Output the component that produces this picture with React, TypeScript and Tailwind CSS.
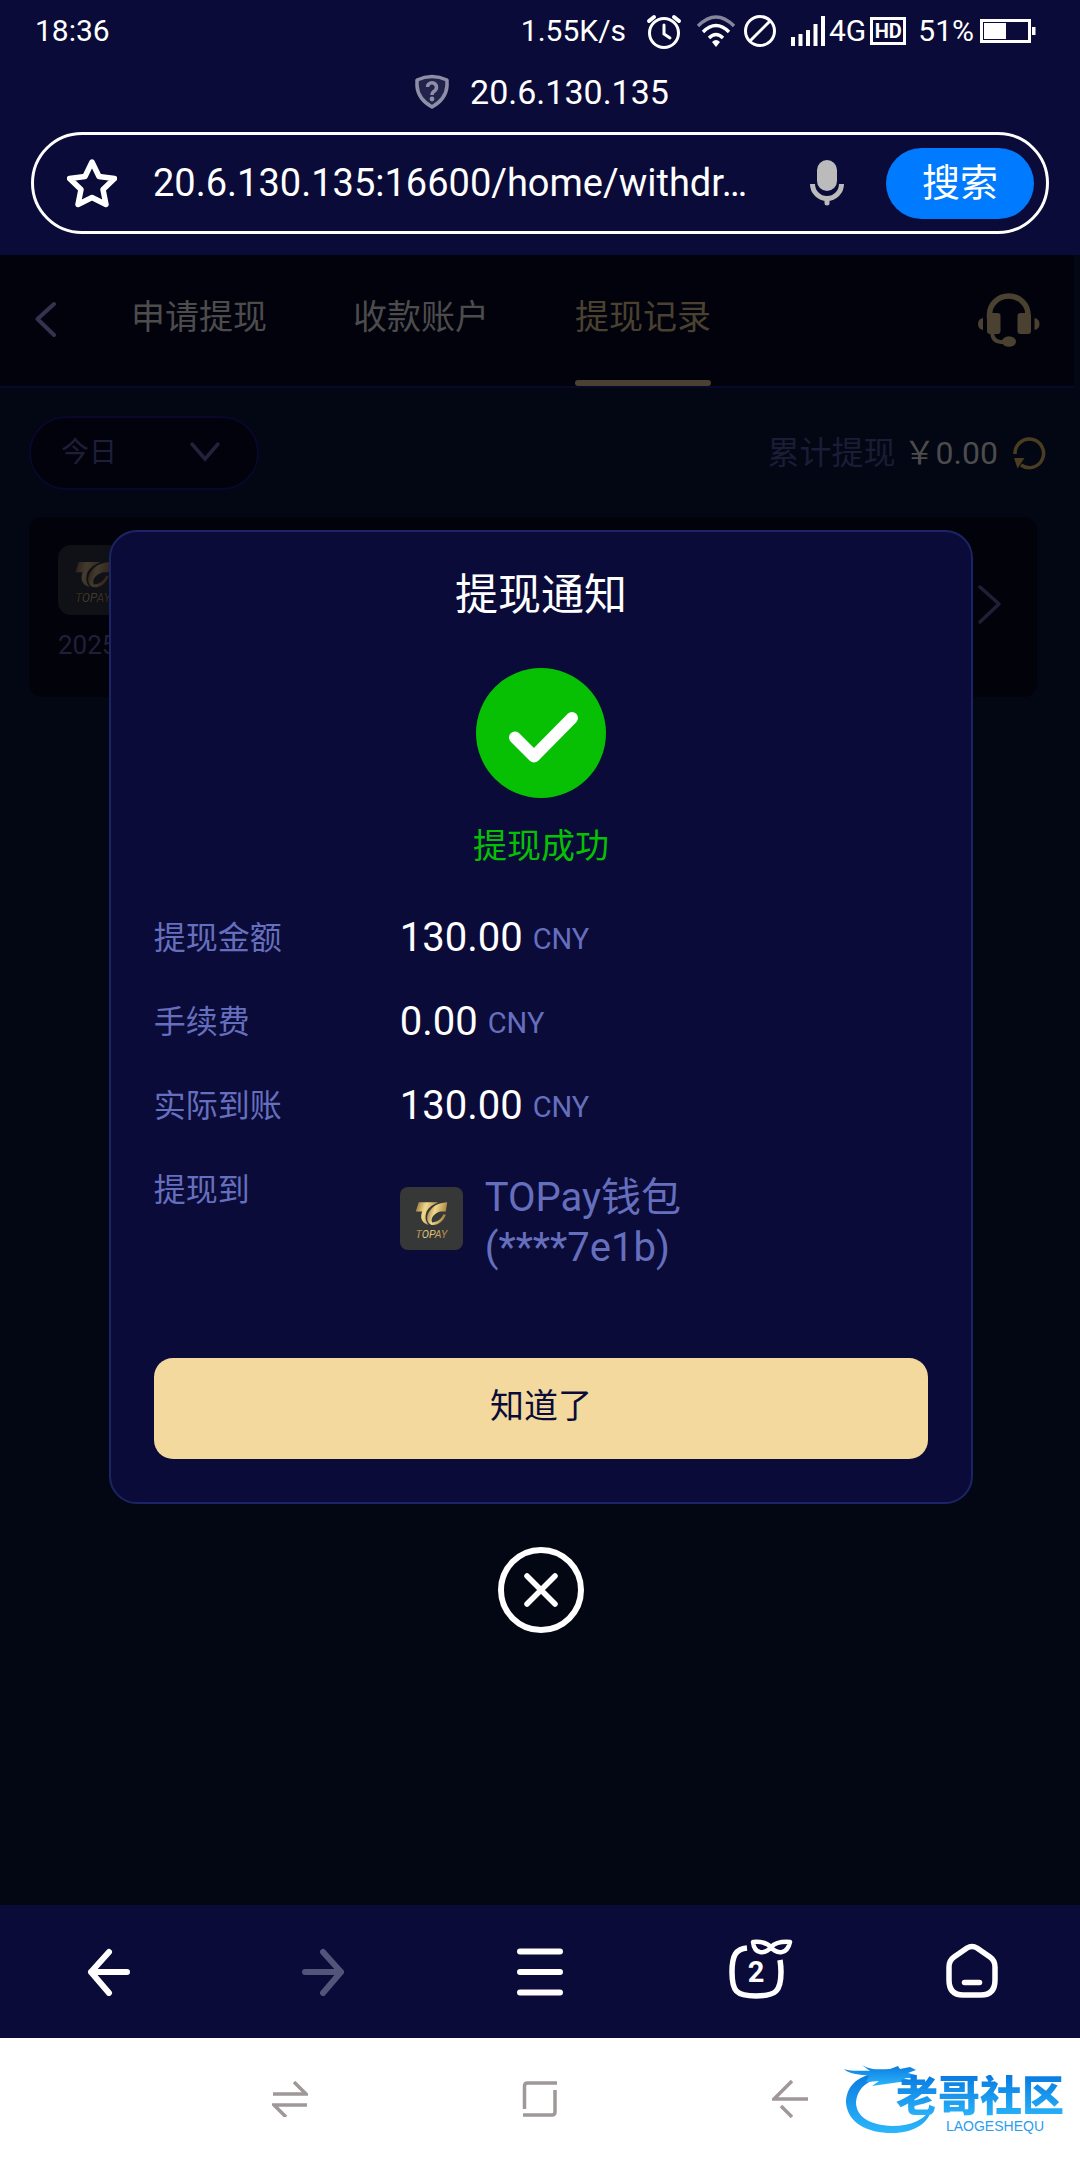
import { useState } from "react";

const TABS = ["申请提现", "收款账户", "提现记录"];

const AMOUNTS = [
  { label: "提现金额", value: "130.00" },
  { label: "手续费", value: "0.00" },
  { label: "实际到账", value: "130.00" },
];

function StatusBar() {
  return (
    <div className="flex h-[62px] items-center pl-[35px] pr-11 text-[30px] leading-none">
      <span>18:36</span>
      <span className="ml-auto">1.55K/s</span>
      {/* Alarm */}
      <svg className="ml-5 h-9 w-9" viewBox="0 0 36 36" fill="none" stroke="#fff" strokeWidth="3" strokeLinecap="round">
        <circle cx="18" cy="20" r="14.5" />
        <path d="M18 12v9l6 4" />
        <path d="M3 8l5-4M33 8l-5-4" strokeWidth="4" />
      </svg>
      {/* Wifi */}
      <svg className="ml-[15px] h-[34px] w-[38px]" viewBox="0 0 38 34" fill="none" stroke="#fff" strokeWidth="3.4">
        <path d="M1 12Q19-6 37 12" opacity="0.5" />
        <path d="M6 18q13-13 26 0" />
        <path d="M12 24q7-7 14 0" />
        <path d="M15 28q4-4 8 0l-4 5z" fill="#fff" stroke="none" />
      </svg>
      <svg className="ml-2 h-[34px] w-[34px]" viewBox="0 0 34 34" fill="none" stroke="#fff" strokeWidth="3">
        <circle cx="17" cy="17" r="14.5" />
        <path d="M7 27L27 7" />
      </svg>
      {/* Signal */}
      <svg className="ml-[14px] h-[30px] w-[34px]" viewBox="0 0 34 30" fill="#fff">
        <path d="M0 21h4v9H0zM7.500 18h4v12h-4zM15 14h4v16h-4zM22.500 8h4v22h-4zM30 0h4v30h-4z" />
      </svg>
      <span className="ml-1">4G</span>
      <span className="ml-1 flex h-7 w-9 items-center justify-center border-[3px] border-white text-[20px] font-bold leading-none">
        HD
      </span>
      <span className="ml-3">51%</span>
      {/* Battery */}
      <svg className="ml-[6px] h-6 w-14" viewBox="0 0 56 24">
        <rect x="1.500" y="1.500" width="48" height="21" fill="none" stroke="#fff" strokeWidth="3" />
        <rect x="4" y="4" width="22" height="16" fill="#fff" />
        <path d="M52 8h3.500v8H52z" fill="#fff" />
      </svg>
    </div>
  );
}

function AddressBar() {
  return (
    <>
      <div className="flex h-[60px] items-center justify-center gap-5 pl-[3px] text-[34px] leading-none">
        <svg className="h-9 w-9" viewBox="0 0 36 36" fill="none" stroke="#8e8ea6">
          <path
            d="M3 6Q18-1 33 6V12Q32 25 18 33Q4 25 3 12Z"
            strokeWidth="3.500"
            strokeLinejoin="round"
            fill="#22234c"
          />
          <path d="M13.500 13a4.500 4.500 0 1 1 7 4q-2.500 1.500-2.500 4" strokeWidth="3.500" />
          <circle cx="18" cy="25" r="2.400" fill="#8e8ea6" stroke="none" />
        </svg>
        <span>20.6.130.135</span>
      </div>
      <form
        className="mx-[31px] mt-[10px] flex h-[102px] items-center rounded-full border-[3px] border-white pl-[33px] pr-3"
        onSubmit={(e) => e.preventDefault()}
      >
        <button type="button" aria-label="收藏" className="shrink-0">
          <svg className="h-[50px] w-[50px]" viewBox="0 0 50 50">
            <path
              d="M25 4L32 18.500L47.500 20.500L36 31.500L39 46.500L25 39.500L11 46.500L14 31.500L2.500 20.500L18 18.500Z"
              fill="none"
              stroke="#fff"
              strokeWidth="5.500"
              strokeLinejoin="round"
            />
          </svg>
        </button>
        <input
          aria-label="网址"
          readOnly
          defaultValue="20.6.130.135:16600/home/withdr…"
          className="ml-9 min-w-0 flex-1 bg-transparent text-[38px] text-white outline-none"
        />
        <button type="button" aria-label="语音" className="shrink-0">
          <svg className="h-12 w-[34px]" viewBox="0 0 34 48" fill="none" stroke="#bbb" strokeWidth="5">
            <rect x="7" y="1" width="20" height="31" rx="10" fill="#bbb" stroke="none" />
            <path d="M2.500 25a14.500 14.500 0 0 0 29 0" />
            <path d="M17 40v4" strokeLinecap="round" />
          </svg>
        </button>
        <button
          type="submit"
          className="ml-[42px] h-[71px] w-[148px] shrink-0 rounded-full bg-[#007aff] text-[38px] leading-none"
        >
          搜索
        </button>
      </form>
    </>
  );
}

function ToPayLogo({ className, dim }: { className: string; dim?: boolean }) {
  return (
    <svg className={className} viewBox="0 0 64 64">
      <defs>
        <linearGradient id="gold" x1="0" y1="0" x2="1" y2="0.300">
          <stop offset="0" stopColor="#8f6a34" />
          <stop offset="0.450" stopColor="#f2d98c" />
          <stop offset="1" stopColor="#a9803f" />
        </linearGradient>
      </defs>
      <rect width="64" height="64" rx={dim ? 12 : 8} fill="#363737" />
      <g fill="url(#gold)">
        <path d="M19 15.500H39C33 18 29 21 27 25C25 31 26 35 29 38.500C22 37 20 31 22.500 25H16Z" />
        <path d="M48 15.500L46.500 25H41C35 27 31 31 32.500 36C37 36 42 33 44 28H46.500C44.500 35 38 39.500 32 38.500C26 36 26.500 28 31 23C35 18 41 16 48 15.500Z" />
        <text
          x="32"
          y="52"
          textAnchor="middle"
          fontSize="11"
          fontStyle="italic"
          fontFamily="Roboto, sans-serif"
        >
          TOPAY
        </text>
      </g>
    </svg>
  );
}

function PageHeader() {
  const [active, setActive] = useState(2);

  return (
    <header className="mr-[6px] flex h-[133px] border-b-2 border-[#07082a] bg-[#02020c] pl-[35px] pr-[33px]">
      <button aria-label="返回" className="h-32">
        <svg className="h-10 w-6" viewBox="0 0 24 40" fill="none" stroke="#33334f" strokeWidth="4" strokeLinecap="round" strokeLinejoin="round">
          <path d="M19 5L2.500 20L19 36" />
        </svg>
      </button>
      <nav className="ml-[72px] flex gap-[86px]">
        {TABS.map((tab, i) => (
          <button
            key={tab}
            onClick={() => setActive(i)}
            className={`flex flex-col items-center text-[34px] ${i === active ? "text-[#4a4130]" : "text-[#4c4c4c]"}`}
          >
            <span className="flex flex-1 items-center">{tab}</span>
            <span className={`h-[6px] w-full rounded-full ${i === active ? "bg-[#4a4130]" : ""}`} />
          </button>
        ))}
      </nav>
      <button aria-label="客服" className="ml-auto h-[132px]">
        <svg className="h-14 w-16" viewBox="0 0 64 56" fill="#4a4130">
          <path d="M12.500 26V21.500a19.250 18.500 0 0 1 38.500 0V26" fill="none" stroke="#4a4130" strokeWidth="5.500" />
          <rect x="10" y="20" width="13.500" height="21" rx="3" />
          <rect x="40.500" y="20" width="13.500" height="21" rx="3" />
          <path d="M6 25v12q-5-1-5-6t5-6zM57.500 25v12q5-1 5-6t-5-6z" />
          <path d="M15 40q1 9 9 9h6" fill="none" stroke="#4a4130" strokeWidth="4" />
          <ellipse cx="32" cy="48.500" rx="7" ry="5.300" />
        </svg>
      </button>
    </header>
  );
}

function Records() {
  return (
    <div className="pl-[29px]">
      <div className="mt-7 flex h-[74px] items-center justify-between pr-[34px]">
        <div className="relative">
          <select
            aria-label="日期"
            className="h-[74px] w-[230px] appearance-none rounded-full border-2 border-[#07082a] bg-[#02020d] pl-[30px] text-[28px] text-[#1e1e38]"
          >
            <option>今日</option>
          </select>
          <svg className="pointer-events-none absolute right-[38px] top-6 h-6 w-8" viewBox="0 0 32 24" fill="none" stroke="#22223c" strokeWidth="3.500" strokeLinecap="round">
            <path d="M3 4L16 19L29 4" />
          </svg>
        </div>
        <div className="flex items-center text-[32px] leading-none text-[#4c4c4c]">
          <span className="mr-2 text-[#1b1c36]">累计提现</span>
          <span>￥0.00</span>
          <button aria-label="刷新" className="ml-[14px]">
            <svg className="h-[34px] w-[34px]" viewBox="0 0 34 34">
              <path d="M3 18A14.300 14.300 0 1 1 9 29" fill="none" stroke="#4a3d22" strokeWidth="3.500" />
              <path d="M2 22H12.500L5.500 32.500Z" fill="#4a3d22" />
            </svg>
          </button>
        </div>
      </div>
      <div className="mr-[43px] mt-[27px] flex h-[180px] justify-between rounded-[14px] bg-[#02020b] px-[29px] pt-7">
        <div className="flex flex-col gap-[17px]">
          <ToPayLogo className="h-[70px] w-[70px] opacity-[0.27]" dim />
          <span className="text-[26px] leading-none text-[#1f2038]">2025</span>
        </div>
        <svg className="mr-[6px] mt-[38px] h-[42px] w-6" viewBox="0 0 24 42" fill="none" stroke="#1f2038" strokeWidth="3.500" strokeLinecap="round" strokeLinejoin="round">
          <path d="M2 4L21 21L2 39" />
        </svg>
      </div>
    </div>
  );
}

function WithdrawDialog({ onClose }: { onClose: () => void }) {
  return (
    <div className="absolute inset-0 flex flex-col items-center justify-center gap-[43px] pl-[2px] pt-[2px]">
      <div
        role="dialog"
        aria-labelledby="dialog-title"
        className="flex w-[80.2%] flex-col rounded-[28px] border-2 border-[#1b2566] bg-[#0a0b38] px-[43px] pb-[43px] pt-[31px]"
      >
        <h2 id="dialog-title" className="text-center text-[43px] leading-[64px]">
          提现通知
        </h2>
        <svg className="mx-auto mt-[41px] h-[130px] w-[130px]" viewBox="0 0 130 130">
          <circle cx="65" cy="65" r="65" fill="#07c004" />
          <path d="M39 69.500L58 88.500L96 50" fill="none" stroke="#fff" strokeWidth="12" strokeLinecap="round" strokeLinejoin="round" />
        </svg>
        <p className="mt-6 text-center text-[34px] leading-[48px] text-[#07c004]">提现成功</p>

        <dl className="mt-[26px] text-[32px] text-[#666fbe]">
          {AMOUNTS.map((row) => (
            <div key={row.label} className="flex h-[84px] items-center">
              <dt className="w-[246px]">{row.label}</dt>
              <dd className="flex items-center gap-[10px] text-[29px]">
                <span className="text-[40px] text-white">{row.value}</span>
                <span className="pt-1">CNY</span>
              </dd>
            </div>
          ))}
          <div className="flex">
            <dt className="w-[246px] leading-[84px]">提现到</dt>
            <dd className="flex gap-[22px] pt-[25px]">
              <ToPayLogo className="mt-[14px] h-[63px] w-[63px]" />
              <span className="w-[240px] break-words text-[40px] leading-[50px]">TOPay钱包 (****7e1b)</span>
            </dd>
          </div>
        </dl>

        <button
          onClick={onClose}
          className="mt-[85px] h-[101px] rounded-[19px] bg-[#f4d99f] pb-1 text-[34px] leading-none text-[#0a0b38]"
        >
          知道了
        </button>
      </div>
      <button aria-label="关闭" onClick={onClose}>
        <svg className="h-[86px] w-[86px]" viewBox="0 0 86 86" fill="none" stroke="#fff" strokeLinecap="round">
          <circle cx="43" cy="43" r="40" strokeWidth="6" />
          <path d="M29 29L57 57M57 29L29 57" strokeWidth="5.500" />
        </svg>
      </button>
    </div>
  );
}

function BrowserToolbar() {
  return (
    <nav className="grid h-[133px] grid-cols-5 place-items-center bg-[#0a0b38]">
      <button aria-label="后退">
        <svg className="h-12 w-11" viewBox="0 0 44 48" fill="none" stroke="#fff" strokeWidth="6" strokeLinecap="round" strokeLinejoin="round">
          <path d="M23 4L5 24L23 45M5 24H41" />
        </svg>
      </button>
      <button aria-label="前进" disabled>
        <svg className="h-12 w-11" viewBox="0 0 44 48" fill="none" stroke="#54547a" strokeWidth="6" strokeLinecap="round" strokeLinejoin="round">
          <path d="M21 4L39 24L21 45M39 24H3" />
        </svg>
      </button>
      <button aria-label="菜单">
        <svg className="h-12 w-[46px]" viewBox="0 0 46 48" stroke="#fff" strokeWidth="6" strokeLinecap="round">
          <path d="M3 3.500H43M3 24H43M3 44.500H43" />
        </svg>
      </button>
      {/* Open windows */}
      <button aria-label="窗口">
        <svg className="h-[70px] w-[58px] overflow-visible" viewBox="0 0 58 70" fill="none" stroke="#fff">
          <path d="M20 11C9 12 5 18 5 35C5 54 9 59 29 59C49 59 54 54 54 35Q54 29 53 23" strokeWidth="5.500" />
          <path
            d="M26 5Q38 4 44 10Q40 16 33 15Q27 14 26 5ZM63 5Q50 4 44 10Q48 16 55 15Q61 14 63 5Z"
            strokeWidth="4.500"
            strokeLinejoin="round"
          />
          <text x="29" y="45" textAnchor="middle" fontSize="29" fontWeight="700" fill="#fff" stroke="none">
            2
          </text>
        </svg>
      </button>
      <button aria-label="主页">
        <svg className="h-[60px] w-14" viewBox="0 0 56 60" fill="none" stroke="#fff" strokeWidth="5.500" strokeLinecap="round">
          <path d="M23 6Q28 3 33 6L46 15Q51 18.500 51 25V38Q51 53 37 53H19Q5 53 5 38V25Q5 18.500 10 15Z" />
          <path d="M20.500 40.500H35.500" />
        </svg>
      </button>
    </nav>
  );
}

function SystemNav() {
  return (
    <div className="relative grid h-[122px] grid-cols-3 place-items-center bg-white px-[165px]">
      <button aria-label="最近任务">
        <svg className="h-9 w-9" viewBox="0 0 36 36" fill="none" stroke="#a09898" strokeWidth="3.500">
          <path d="M1 13H34L22 1M35 24H2L14 36" />
        </svg>
      </button>
      <button aria-label="桌面">
        <svg className="h-9 w-9" viewBox="0 0 36 36" fill="none" stroke="#a09898" strokeWidth="3.500">
          <path d="M35 2H5.500Q2.500 2 2.500 5V28M33 9V31Q33 34 30 34H1" />
        </svg>
      </button>
      <button aria-label="返回键">
        <svg className="h-10 w-9" viewBox="0 0 36 40" fill="none" stroke="#a09898" strokeWidth="3.500">
          <path d="M36 20H2L20 2M9 27L20 38" />
        </svg>
      </button>

      {/* Community badge sits over the bar */}
      <div className="absolute right-4 top-[17px] flex">
        <svg className="h-20 w-[92px]" viewBox="0 0 92 80">
          <defs>
            <linearGradient id="dragon" x1="0" y1="0" x2="0" y2="1">
              <stop offset="0" stopColor="#0a7ae0" />
              <stop offset="1" stopColor="#2cb6fb" />
            </linearGradient>
          </defs>
          <g fill="url(#dragon)">
            <path d="M40 17C12 20 4 34 4 48C6 68 25 78 50 78C72 78 88 68 90 52C84 64 70 71 50 71C28 70 14 62 14 47C15 36 22 27 36 24Z" />
            <path d="M2 14C10 17 22 15 28 16L20 10C30 16 40 14 48 14L56 11L58 14L68 12L74 15L66 18L74 20L72 23L62 23L71 27L58 27L44 29L30 31L37 26L24 27L27 21C18 19 8 20 2 14Z" />
          </g>
        </svg>
        <div className="-ml-[38px] flex flex-col items-end pt-5">
          <span className="bg-gradient-to-b from-[#0a7ae0] to-[#2cb6fb] bg-clip-text text-[42px] font-black leading-[44px] text-transparent">
            老哥社区
          </span>
          <span className="mr-5 font-['Liberation_Sans',sans-serif] text-[14px] leading-[14px] text-[#2c9cf0]">
            LAOGESHEQU
          </span>
        </div>
      </div>
    </div>
  );
}

export default function App() {
  const [open, setOpen] = useState(true);

  return (
    <div className="flex min-h-screen flex-col bg-[#0a0b38] font-['Roboto','Noto_Sans_CJK_SC',sans-serif] text-white">
      <div className="h-[255px]">
        <StatusBar />
        <AddressBar />
      </div>
      <main className="relative flex-1 bg-[#030613]">
        <PageHeader />
        <Records />
        {open && <WithdrawDialog onClose={() => setOpen(false)} />}
      </main>
      <BrowserToolbar />
      <SystemNav />
    </div>
  );
}
